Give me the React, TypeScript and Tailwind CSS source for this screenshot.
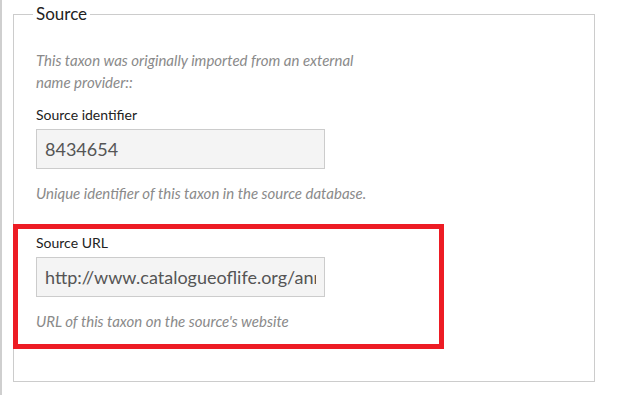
export default function App() {
  return (
    <div className="relative h-[395px] w-[625px] overflow-hidden border-l-2 border-[#cfcfcf] bg-white font-['Lato',_sans-serif]">
      <fieldset className="ml-[11px] mt-[2px] w-[582px] border border-[#cccccc] px-[22px] pb-[49px] pt-[23px]">
        <legend className="-ml-[3px] px-[3px] text-[17px] leading-[24px] text-[#222]">Source</legend>

        <p className="w-[340px] text-[15px] italic leading-[22px] text-[#8a8a8a]">
          This taxon was originally imported from an external name provider::
        </p>

        <div className="mt-[12px]">
          <label className="block text-[14px] leading-[20px] text-[#222]">Source identifier</label>
          <input
            readOnly
            value="8434654"
            className="mt-[4px] block h-10 w-[289px] border border-[#cccccc] bg-[#f4f4f4] px-[8px] text-[18px] text-[#555] outline-none"
          />
          <p className="mt-[13px] text-[15px] italic leading-[22px] text-[#8a8a8a]">
            Unique identifier of this taxon in the source database.
          </p>
        </div>

        <div className="mt-[29px]">
          <label className="block text-[14px] leading-[20px] text-[#222]">Source URL</label>
          <input
            readOnly
            value="http://www.catalogueoflife.org/annual-checklist/2019/details/species/id/8434654"
            className="mt-[4px] block h-10 w-[289px] border border-[#cccccc] bg-[#f4f4f4] px-[8px] text-[18px] text-[#555] outline-none"
          />
          <p className="mt-[13px] text-[15px] italic leading-[22px] text-[#8a8a8a]">
            URL of this taxon on the source's website
          </p>
        </div>
      </fieldset>

      {/* highlight annotation */}
      <div className="absolute left-[11px] top-[224px] h-[125px] w-[431px] border-[5px] border-[#ed1c24]" />
    </div>
  );
}
